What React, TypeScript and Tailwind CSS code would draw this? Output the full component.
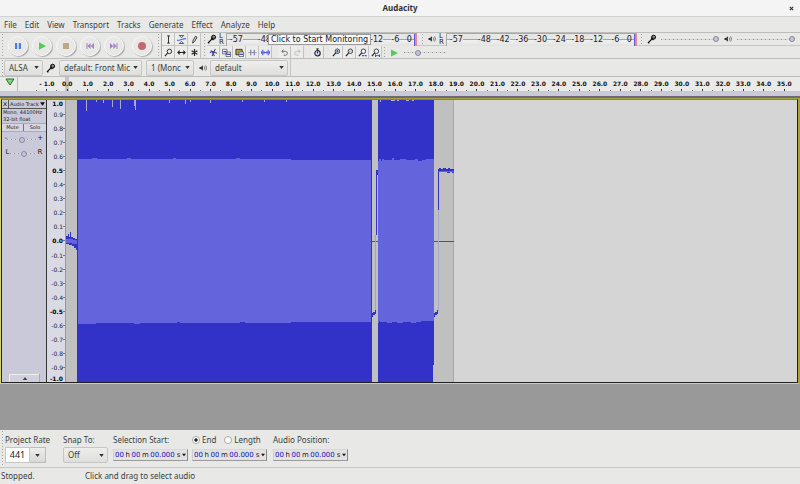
import type { ReactNode } from 'react';

const menuItems = ['File', 'Edit', 'View', 'Transport', 'Tracks', 'Generate', 'Effect', 'Analyze', 'Help'];
const playbackMarks = ['-48', '-42', '-36', '-30', '-24', '-18', '-12', '-6'];
// The middle marks stay empty while the monitoring hint covers them
const recordingMarks = ['-48', '', '', '', '', '', '-12', '-6'];
const seconds = Array.from({ length: 37 }, (_, i) => i - 1);
const levels = Array.from({ length: 21 }, (_, i) => (10 - i) / 10);

const Grip = () => (
  <div className="w-[3px] shrink-0 self-stretch bg-[radial-gradient(#a3a3a3_1px,transparent_1px)] bg-[length:3px_3px]" />
);

const MicIcon = () => (
  <svg viewBox="0 0 10 10" className="h-[10px] w-[10px] shrink-0">
    <circle cx="6.6" cy="3.2" r="2" fill="#555" stroke="#111" />
    <path d="M5 4.8 1 9M1 9h1.4M4.2 4l2.2 2.2" stroke="#111" strokeWidth="1.2" fill="none" />
    <circle cx="6.9" cy="2.8" r="0.8" fill="#bbb" />
  </svg>
);

const SpeakerIcon = () => (
  <svg viewBox="0 0 10 10" className="h-[10px] w-[10px] shrink-0">
    <path d="M1.5 4h1.4l2-1.8v5.6l-2-1.8H1.5z" fill="#333" />
    <path d="M6.2 3.4q1.2 1.6 0 3.2M7.6 2.4q2 2.6 0 5.2" stroke="#666" strokeWidth="0.8" fill="none" />
  </svg>
);

const Arrow = () => (
  <svg viewBox="0 0 6 4" className="h-[3px] w-[5px]">
    <path d="M0 0h6L3 4z" fill="#333" />
  </svg>
);

interface IconButtonProps {
  label: string;
  children: ReactNode;
}

const RoundButton = ({ label, children }: IconButtonProps) => (
  <button
    aria-label={label}
    className="flex h-5 w-5 shrink-0 items-center justify-center rounded-full border border-[#f8f8f8] bg-[#e8e8e7] shadow-[1px_1px_1px_#aaa]"
  >
    <svg viewBox="0 0 10 10" className="h-[10px] w-[10px]">
      {children}
    </svg>
  </button>
);

const ToolButton = ({ label, children }: IconButtonProps) => (
  <button
    aria-label={label}
    className="flex h-[13px] w-[13px] shrink-0 items-center justify-center border-r border-b border-[#c2c2c2] bg-[#ececeb]"
  >
    <svg viewBox="0 0 10 10" fill="none" stroke="#222" className="h-[9px] w-[9px]">
      {children}
    </svg>
  </button>
);

interface ComboProps {
  label: string;
  value: string;
  className: string;
}

const Combo = ({ label, value, className }: ComboProps) => (
  <div className={`relative flex shrink-0 items-center ${className}`}>
    <select
      id={label}
      aria-label={label}
      className="h-full w-full appearance-none truncate rounded-xs border border-[#c6c6c4] bg-linear-to-b from-[#eeeeed] to-[#dededc] pr-2 pl-1 text-[8px] leading-3 text-[#3a3f40]"
    >
      <option>{value}</option>
    </select>
    <div className="pointer-events-none absolute right-1">
      <Arrow />
    </div>
  </div>
);

interface MeterProps {
  label: string;
  marks: string[];
}

const Meter = ({ label, marks }: MeterProps) => (
  <div
    aria-label={label}
    className="flex h-[13px] w-[191px] shrink-0 items-center border-t border-l border-[#a8a8a8] bg-[linear-gradient(#e6e6e5_5px,#a4a4a4_5px,#a4a4a4_6px,#f2f2f2_6px,#e2e2e1_12px)]"
  >
    <div className="grid w-[187px] shrink-0 grid-cols-[2fr_1fr_repeat(8,2fr)_1fr] text-center font-['DejaVu_Sans',sans-serif] text-[8px] leading-[9px] text-[#222]">
      <span>
        <span className="bg-[#e8e8e7]">-57</span>
      </span>
      <span />
      {marks.map((db, i) => (
        <span key={i}>{db && <span className="bg-[#e8e8e7]">{db}</span>}</span>
      ))}
      <span>0</span>
    </div>
    <div className="h-full w-px shrink-0 bg-[#5a5ae4]" />
    <div className="h-full w-[2px] shrink-0 bg-[#e08a8a]" />
  </div>
);

const ChannelLabels = () => (
  <div className="flex w-[5px] shrink-0 flex-col font-['DejaVu_Sans',sans-serif] text-[7px] leading-[6px] text-[#222]">
    <span>L</span>
    <span>R</span>
  </div>
);

interface SliderProps {
  label: string;
  value: number;
  className: string;
}

const Slider = ({ label, value, className }: SliderProps) => (
  <input
    type="range"
    aria-label={label}
    defaultValue={value}
    className={`h-[9px] shrink-0 appearance-none bg-[repeating-linear-gradient(90deg,#999_0_1px,#d4d4d4_1px_4px)] bg-[length:100%_1px] bg-center bg-no-repeat [&::-webkit-slider-thumb]:h-[6px] [&::-webkit-slider-thumb]:w-[6px] [&::-webkit-slider-thumb]:appearance-none [&::-webkit-slider-thumb]:rounded-full [&::-webkit-slider-thumb]:border [&::-webkit-slider-thumb]:border-[#88889a] [&::-webkit-slider-thumb]:bg-[#c4c4dc] ${className}`}
  />
);

const TransportBar = () => (
  <div className="flex w-[157px] shrink-0 items-center gap-1 pl-px">
    <Grip />
    <div className="flex items-center gap-1">
      <RoundButton label="Pause">
        <path d="M2 2h2.2v6H2zM5.8 2H8v6H5.8z" fill="#4a7be6" />
      </RoundButton>
      <RoundButton label="Play">
        <path d="M2 1.2 9 5 2 8.8z" fill="#52cc55" />
      </RoundButton>
      <RoundButton label="Stop">
        <path d="M2 2h6v6H2z" fill="#bcaa84" />
      </RoundButton>
      <RoundButton label="Skip to Start">
        <path d="M1.5 2h1v6h-1zM5.6 2v6L2.5 5zM9 2v6L5.8 5z" fill="#a57fc6" />
      </RoundButton>
      <RoundButton label="Skip to End">
        <path d="M7.5 2h1v6h-1zM4.4 2v6l3.1-3zM1 2v6l3.2-3z" fill="#a57fc6" />
      </RoundButton>
      <div className="pl-1">
        <RoundButton label="Record">
          <circle cx="5" cy="5" r="4" fill="#c4686f" />
        </RoundButton>
      </div>
    </div>
  </div>
);

const ToolsBar = () => (
  <div className="grid shrink-0 grid-cols-3 border-l border-[#aaa]">
    <ToolButton label="Selection Tool">
      <path d="M3.5 1h3M5 1v8M3.5 9h3" />
    </ToolButton>
    <ToolButton label="Envelope Tool">
      <path d="M2.5 0.5h5L5 3zM2.5 9.5h5L5 7z" strokeWidth="0.8" />
      <path d="M0 6q2.5 0 5-1t5-1" stroke="#4a6cf0" strokeWidth="1.4" />
    </ToolButton>
    <ToolButton label="Draw Tool">
      <path d="M3 9l.5-3L6 1.5l1.8 1L5.2 7z" />
    </ToolButton>
    <ToolButton label="Zoom Tool">
      <circle cx="6" cy="3.8" r="2.5" />
      <path d="M4 5.8 1 9" strokeWidth="1.2" />
    </ToolButton>
    <ToolButton label="Time Shift Tool">
      <path d="M1 5h8M3 3 1 5l2 2M7 3l2 2-2 2" strokeWidth="1.2" />
    </ToolButton>
    <ToolButton label="Multi-Tool">
      <path d="M5 1.2v7.6M1.8 3l6.4 4M8.2 3 1.8 7" strokeWidth="1.3" />
    </ToolButton>
  </div>
);

const Lens = ({ children }: { children?: ReactNode }) => (
  <>
    <circle cx="6" cy="3.6" r="2.5" fill="#eef" strokeWidth="0.9" />
    <path d="M4.1 5.5 1 9" strokeWidth="1.3" />
    {children}
  </>
);

const EditBar = () => (
  <div className="flex h-[13px] items-center">
    <ToolButton label="Cut">
      <path d="M2 3l7 3M7 1 3.4 9" stroke="#223" />
      <path d="M1 5.5q2-3 3 0M4 5l2 4" stroke="#3344d8" strokeWidth="1.2" />
    </ToolButton>
    <ToolButton label="Copy">
      <path d="M.5 1.5h5v5h-5zM4.5 4.5h5v5h-5z" fill="#fff" stroke="#445" strokeWidth="0.8" />
      <path d="M1.5 4h3M5 7h4" stroke="#2f3fe0" strokeWidth="1.4" />
    </ToolButton>
    <ToolButton label="Paste">
      <path d="M1 1.5h7v6H1z" fill="#b2a24c" strokeWidth="0.9" />
      <path d="M4.5 4.5h5v5h-5z" fill="#fff" stroke="#445" strokeWidth="0.8" />
      <path d="M5 7h4" stroke="#2f3fe0" strokeWidth="1.4" />
    </ToolButton>
    <ToolButton label="Trim">
      <path d="M0 5h3M7 5h3" stroke="#aaa" />
      <path d="M3 2v6M7 2v6M4 5h2" stroke="#777da8" strokeWidth="1.3" />
    </ToolButton>
    <ToolButton label="Silence">
      <path d="M0.5 3.5v3M2 2v6M3.5 3.5v3M6.5 3.5v3M8 2v6M9.5 3.5v3" stroke="#4a58e0" strokeWidth="1.2" />
      <path d="M3 5h4" stroke="#4a58e0" />
    </ToolButton>
    <div className="flex pl-[6px]">
      <ToolButton label="Undo">
        <path d="M4 8h2.2q2-.2 2-2.2T6 3.7H2M4 1.8 2 3.7l2 2" stroke="#666" />
      </ToolButton>
      <ToolButton label="Redo">
        <path d="M6 8H3.8q-2-.2-2-2.2T4 3.7h4M6 1.8l2 1.9-2 2" stroke="#bbb" />
      </ToolButton>
    </div>
    <div className="pl-[7px]">
      <ToolButton label="Sync-Lock Tracks">
        <circle cx="5" cy="5.8" r="3" fill="#ccd5ef" strokeWidth="1.2" />
        <path d="M5 6V3.6M3.6 1h2.8M5 1v2" />
      </ToolButton>
    </div>
    <div className="flex pl-[6px]">
      <ToolButton label="Zoom In">
        <Lens>
          <path d="M4.6 3.6h2.8M6 2.2V5" stroke="#2f3fe0" />
        </Lens>
      </ToolButton>
      <ToolButton label="Zoom Out">
        <Lens>
          <path d="M4.6 3.6h2.8" stroke="#8a90d8" />
        </Lens>
      </ToolButton>
      <ToolButton label="Fit Selection">
        <Lens>
          <path d="M4.5 8.5h5" stroke="#2f3fe0" strokeDasharray="2 1" strokeWidth="1.6" />
        </Lens>
      </ToolButton>
      <ToolButton label="Fit Project">
        <Lens>
          <path d="M5 8.5h5M5 7v3M9.5 7v3" stroke="#2f3fe0" />
        </Lens>
      </ToolButton>
    </div>
    <div className="flex items-center gap-1 self-stretch pl-px">
      <Grip />
      <button aria-label="Play-at-Speed">
        <svg viewBox="0 0 8 8" className="h-2 w-2">
          <path d="M1 0.5 8 4 1 7.5z" fill="#52cc55" />
        </svg>
      </button>
      <div className="flex pl-[2px]">
        <Slider label="Playback Speed" value={30} className="w-[42px]" />
      </div>
    </div>
  </div>
);

const Toolbars = () => (
  <div className="flex h-[27px] shrink-0 overflow-hidden border-t border-b border-[#bdbdbb]">
    <TransportBar />
    <div className="flex gap-px">
      <Grip />
      <ToolsBar />
    </div>
    <div className="flex min-w-0 flex-1 gap-px pl-[2px]">
      <Grip />
      <div className="flex min-w-0 flex-1 flex-col">
        <div className="flex h-[13px] items-center border-b border-[#c6c6c4]">
          <div className="relative flex items-center gap-[2px]">
            <MicIcon />
            <ChannelLabels />
            <Meter label="Recording Meter" marks={recordingMarks} />
            <div
              role="tooltip"
              className="absolute left-[61px] border border-[#999] bg-[#f7f7f7] px-[2px] font-['DejaVu_Sans',sans-serif] text-[8px] leading-[9px] whitespace-nowrap text-[#222]"
            >
              Click to Start Monitoring
            </div>
          </div>
          <div className="flex items-center gap-[2px] self-stretch pl-1">
            <Grip />
            <div className="pl-px">
              <SpeakerIcon />
            </div>
            <ChannelLabels />
            <Meter label="Playback Meter" marks={playbackMarks} />
          </div>
          <div className="flex items-center gap-1 self-stretch pl-[3px]">
            <Grip />
            <MicIcon />
            <Slider label="Recording Volume" value={100} className="w-[58px]" />
            <SpeakerIcon />
            <Slider label="Playback Volume" value={100} className="w-[58px]" />
          </div>
        </div>
        <EditBar />
      </div>
    </div>
  </div>
);

const DeviceBar = () => (
  <div className="flex h-[18px] shrink-0 items-center border-b border-[#bdbdbb] pl-px">
    <Grip />
    <Combo label="Audio Host" value="ALSA" className="h-4 w-[39px]" />
    <div className="px-[3px]">
      <MicIcon />
    </div>
    <Combo label="Recording Device" value="default: Front Mic" className="h-4 w-[83px]" />
    <div className="pl-1">
      <Combo label="Recording Channels" value="1 (Monc" className="h-4 w-[48px]" />
    </div>
    <div className="pr-[2px] pl-1">
      <SpeakerIcon />
    </div>
    <Combo label="Playback Device" value="default" className="h-4 w-[78px]" />
    <div className="ml-[2px] h-full w-px bg-[#c6c6c4]" />
  </div>
);

const Timeline = () => (
  <div className="flex h-[14px] shrink-0 bg-[#eaeae8] font-['DejaVu_Sans',sans-serif]">
    <button aria-label="Pinned Play Head" className="flex w-[18px] shrink-0 justify-end border-r border-[#bbb] pt-px pr-[2px]">
      <svg viewBox="0 0 10 8" className="h-2 w-[10px]">
        <path d="M1 1h8L5 7z" fill="#7fd87f" stroke="#287028" />
      </svg>
    </button>
    <div className="grid min-w-0 flex-1 grid-cols-[repeat(37,minmax(0,1fr))] pr-1.5 pl-[18px]">
      {seconds.map((s) => (
        <div key={s} className="flex items-end">
          <div className="h-px w-px bg-[#777]" />
          <div className={`flex h-full flex-1 flex-col items-center justify-between ${s === 0 ? 'bg-[linear-gradient(#c4c4c4,#c4c4c4)] bg-[length:4px_100%] bg-center bg-no-repeat' : ''}`}>
            <span className="pt-[3px] text-[6px] leading-[8px] font-bold whitespace-nowrap text-[#111]">
              {s < 0 ? '- 1.0' : s.toFixed(1)}
            </span>
            <div className="h-[2px] w-px bg-[#333]" />
          </div>
        </div>
      ))}
    </div>
  </div>
);

const TrackPanel = () => (
  <div className="flex w-[45px] shrink-0 flex-col items-center border-r border-[#333] bg-[#c9c9d9] font-['DejaVu_Sans',sans-serif] text-[5px] leading-[8px] text-[#222]">
    <div className="flex w-full border-b border-[#555]">
      <button aria-label="Close Track" className="h-2 w-[7px] shrink-0 border-r border-[#555] text-[7px] leading-[7px]">
        x
      </button>
      <button className="flex h-2 flex-1 items-center justify-between px-px whitespace-nowrap">
        Audio Track
        <svg viewBox="0 0 6 4" className="h-[4px] w-[5px]">
          <path d="M0 0h6L3 4z" fill="#111" />
        </svg>
      </button>
    </div>
    <p className="w-full pl-px leading-[7px] whitespace-nowrap">
      Mono, 44100Hz
      <br />
      32-bit float
    </p>
    <div className="grid w-full grid-cols-2 border-t border-b border-[#aaaabc] bg-[#d6d6e2]">
      <button className="border-r border-[#777] leading-[7px]">Mute</button>
      <button className="leading-[7px]">Solo</button>
    </div>
    <div className="flex h-[12px] items-end text-[7px]">
      <span className="leading-[12px]">-</span>
      <Slider label="Gain" value={50} className="w-[30px]" />
      <span className="leading-[12px]">+</span>
    </div>
    <div className="flex h-[14px] items-end text-[7px]">
      <span className="leading-[12px]">L</span>
      <Slider label="Pan" value={50} className="w-[28px]" />
      <span className="leading-[12px]">R</span>
    </div>
    <button
      aria-label="Collapse Track"
      className="mt-auto flex h-2 w-[30px] items-center justify-center border-t border-l border-[#eee] bg-[#d0d0de] shadow-[1px_0_0_#aaa]"
    >
      <svg viewBox="0 0 6 4" className="h-[3px] w-[6px]">
        <path d="M0 4h6L3 0z" fill="#444" />
      </svg>
    </button>
  </div>
);

const LevelRuler = () => (
  <div className="flex w-[19px] shrink-0 flex-col border-r border-[#999] bg-[#dadae5] font-['DejaVu_Sans',sans-serif] text-[6px] text-[#222]">
    {levels.map((level) => {
      const isEnd = Math.abs(level) === 1;
      const isBold = isEnd || Math.abs(level) === 0.5 || level === 0;
      return (
        <div
          key={level}
          className={`flex items-center justify-end leading-[7px] ${isEnd ? 'flex-1 pr-[2px]' : 'flex-2'} ${isBold ? 'font-bold text-black' : ''}`}
        >
          {level.toFixed(1)}
          {!isEnd && <span className="h-px w-[2px] bg-[#777]" />}
        </div>
      );
    })}
  </div>
);

// One unit of the drawing is one column of samples
const Waveform = () => (
  <svg
    viewBox="0 0 731 282"
    preserveAspectRatio="none"
    shapeRendering="crispEdges"
    className="block h-[282px] min-w-0 flex-1 bg-[#d5d5d5]"
  >
    <rect width="388" height="282" fill="#c0c0c0" />
    <rect x="387" width="1" height="282" fill="#a8a8a8" />
    <path d="M306 141.5h6M368 141.5h20" stroke="#555" />
    <path d="M0 136h2v-2h1v3h1v-5h1v5h2v1h2v1h3v11h-2v-2h-2v-2H6v-1H3v-1H0z" fill="#3232c8" />
    <path d="M0 139h7v1h4v4H6v-1H0z" fill="#6464dc" />

    <path d="M11 0h295v282H11z" fill="#3232c8" />
    <path d="M12 59h14v-1h5v1h30v-1h4v1h42v-1h3v1h60v-1h4v1h51v1h80v162h-80v1h-46v-1h-5v1h-60v-1h-3v1H74v1h-6v-1H30v1H12z" fill="#6464dc" />
    <path d="M20.5 0v11M37.5 0v3M46.5 0v7M54.5 0v9M68.5 0v6M69.5 0v10M30.5 0v2M103.5 0v3M119.5 0v4M124.5 0v2M144.5 0v3M176.5 0v2M198.5 0v2M220.5 0v2" stroke="#a9a9ce" />

    <path d="M310 70h2v5h-1v60h-1z" fill="#3232c8" />
    <path d="M309.5 135v76" stroke="#a2a2cb" />
    <path d="M306 213h1v-1h2v-2h1v4h-1v1h-2v2h-1z" fill="#3232c8" />

    <path d="M312 0h56v265h-1v17h-55z" fill="#3232c8" />
    <path d="M312 61h1v-2h2v2h1v-2h2v1h8v-2h2v2h6v-1h6v1h9v-1h3v2h4v-1h4v-1h8v162h-13v1h-5v1h-5v-1h-8v1h-6v-1h-5v1h-5v-1h-7v-1h-1v2h-1z" fill="#6464dc" />
    <path d="M325 0h4v1h-4zM331 0h2v1h-2zM340 0h3v1h-3zM346 0h2v1h-2z" fill="#b4b4c8" />
    <path d="M314.5 0v2" stroke="#a9a9ce" />

    <path d="M372 69h1v-1h2v1h2v-1h3v1h2v-1h2v1h4v4h-2v-1h-2v1h-3v-1h-8v38h-1z" fill="#3232c8" />
    <path d="M373 71h15v1h-15z" fill="#6464dc" />
    <path d="M372.5 110v101" stroke="#a9a9cc" />
    <path d="M368 213h1v-1h2v-2h1v4h-1v1h-2v2h-1z" fill="#3232c8" />
  </svg>
);

const TimeField = ({ label }: { label: string }) => (
  <div
    role="group"
    aria-label={label}
    className="flex h-3 w-[75px] items-center justify-between border border-t-[#d8d8d8] border-r-[#888] border-b-[#999] border-l-[#d0d0d0] bg-[#e2e2e0] px-px font-['DejaVu_Sans',sans-serif] text-[7px] leading-[9px] text-[#222]"
  >
    <input aria-label={`${label} hours`} defaultValue="00" className="w-[9px] text-[#1010c0]" />
    <span>h</span>
    <input aria-label={`${label} minutes`} defaultValue="00" className="w-[9px] text-[#1010c0]" />
    <span>m</span>
    <input aria-label={`${label} seconds`} defaultValue="00.000" className="w-[25px] text-[#1010c0]" />
    <span>s</span>
    <button aria-label={`${label} format`}>
      <svg viewBox="0 0 6 4" className="h-[4px] w-[4px]">
        <path d="M0 0h6L3 4z" fill="#111" />
      </svg>
    </button>
  </div>
);

const EndRadio = ({ label, checked }: { label: string; checked?: boolean }) => (
  <label className="flex items-center gap-[2px]">
    <input
      type="radio"
      name="selection-end"
      defaultChecked={checked}
      className="h-2 w-2 appearance-none rounded-full border border-[#aaa] bg-white checked:bg-[radial-gradient(#222_30%,#fff_50%)]"
    />
    {label}
  </label>
);

const SelectionBar = () => (
  <div className="flex h-[38px] shrink-0 border-b border-[#c6c6c4] pl-px text-[8px] leading-[10px] text-[#3a3f40]">
    <Grip />
    <div className="flex w-[57px] shrink-0 flex-col gap-[2px] pt-[5px] pl-px">
      <label htmlFor="rate">Project Rate</label>
      <div className="flex h-4">
        <input id="rate" defaultValue="441" className="w-[25px] border border-[#c6c6c4] bg-white text-center text-[9px] text-[#222]" />
        <button aria-label="Choose rate" className="flex w-4 items-center justify-center border border-l-0 border-[#bcbcba] bg-linear-to-b from-[#eeeeed] to-[#d8d8d6]">
          <Arrow />
        </button>
      </div>
    </div>
    <div className="flex w-[52px] shrink-0 flex-col gap-[2px] border-[#d4d4d2] pt-[5px] pl-[2px]">
      <label htmlFor="Snap To">Snap To:</label>
      <Combo label="Snap To" value="Off" className="h-4 w-[45px]" />
    </div>
    <div className="flex w-[79px] shrink-0 flex-col gap-1 pt-[5px]">
      <span>Selection Start:</span>
      <TimeField label="Selection Start" />
    </div>
    <div className="flex w-[81px] shrink-0 flex-col gap-1 pt-[5px]">
      <div className="flex gap-2">
        <EndRadio label="End" checked />
        <EndRadio label="Length" />
      </div>
      <TimeField label="Selection End" />
    </div>
    <div className="flex flex-col gap-1 pt-[5px]">
      <span>Audio Position:</span>
      <TimeField label="Audio Position" />
    </div>
  </div>
);

export default function App() {
  return (
    <div className="flex min-h-screen flex-col bg-[#e8e8e7] font-['Noto_Sans','Open_Sans',sans-serif]">
      <header className="grid h-[17px] shrink-0 grid-cols-[1fr_auto_1fr] items-center border-b border-[#d2d2d0] bg-[#f4f4f4] px-[6px]">
        <h1 className="col-start-2 text-[8px] leading-3 font-bold text-[#333]">Audacity</h1>
        <button aria-label="Close" className="justify-self-end">
          <svg viewBox="0 0 6 6" className="h-[5px] w-[5px]">
            <path d="M1 1l4 4M5 1 1 5" stroke="#333" strokeWidth="1.4" />
          </svg>
        </button>
      </header>

      <nav className="flex h-[15px] shrink-0 items-center gap-2 pl-1 text-[8px] leading-3 text-[#3a3f40]">
        {menuItems.map((item) => (
          <button key={item}>{item}</button>
        ))}
      </nav>

      <Toolbars />
      <DeviceBar />
      <Timeline />

      <main className="flex flex-1 flex-col bg-[#999]">
        <div className="h-[7px] border-b-2 border-[#6a6a78] bg-[#c9c9da]" />
        <div className="border border-t-[#a8a038] border-r-2 border-r-[#a8a038] border-b-[#d4d474] border-l-[#d4d474]">
          <div className="flex h-[284px] border border-[#222] border-t-[#8a8430]">
            <TrackPanel />
            <LevelRuler />
            <Waveform />
          </div>
        </div>
      </main>

      <SelectionBar />
      <footer className="flex h-4 shrink-0 items-center text-[8px] leading-3 text-[#3a3f40]">
        <span className="w-[85px] pl-px">Stopped.</span>
        <span>Click and drag to select audio</span>
      </footer>
    </div>
  );
}
